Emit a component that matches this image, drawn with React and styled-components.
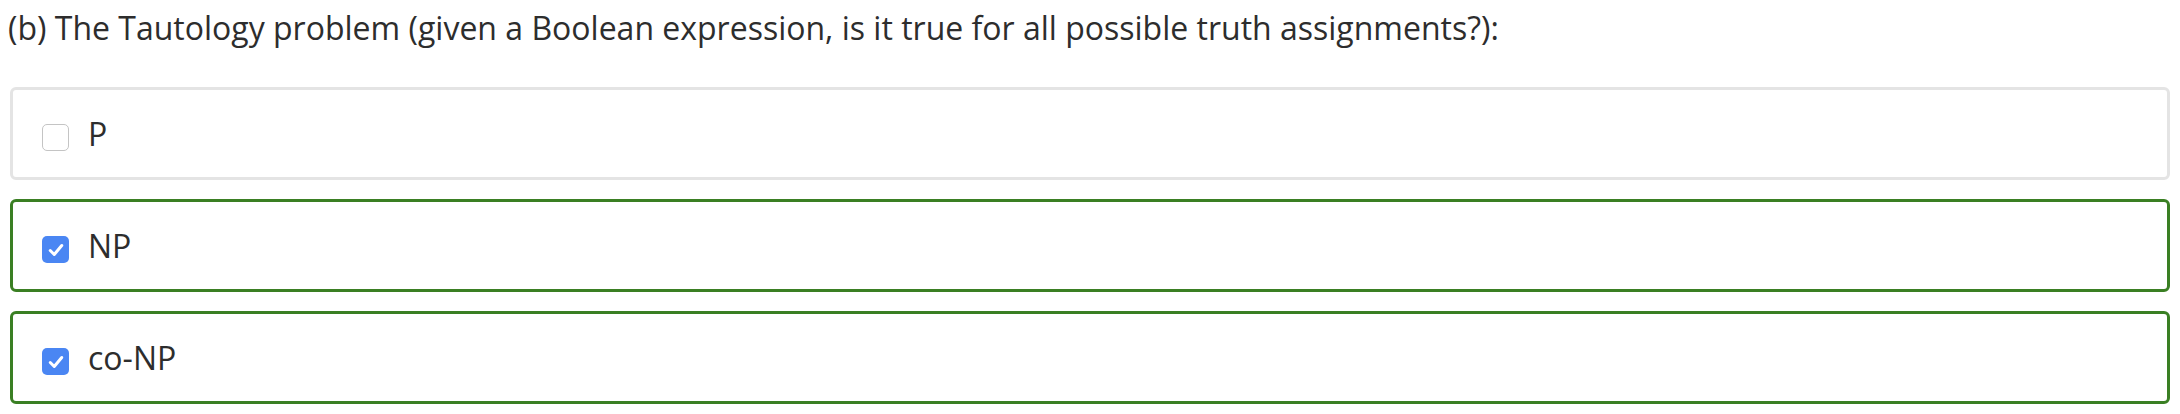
import styled, { createGlobalStyle } from "styled-components"

const GlobalStyle = createGlobalStyle`
  body {
    margin: 0;
    background: #ffffff;
    font-family: "Open Sans", Lato, sans-serif;
    color: #2d2d2d;
  }
`

const Page = styled.div`
  padding: 0 10px 0 8px;
`

const Question = styled.div`
  font-size: 32px;
  line-height: 56px;
  height: 87px;
`

const Options = styled.div`
  display: flex;
  flex-direction: column;
  gap: 19px;
  margin-left: 2px;
`

const Option = styled.label`
  display: flex;
  align-items: center;
  gap: 19px;
  height: 93px;
  box-sizing: border-box;
  padding-left: 29px;
  border: 3px solid ${(p) => (p.$correct ? "#3a7f23" : "#e4e4e4")};
  border-radius: 6px;
  font-size: 32px;
`

const Box = styled.span`
  width: 27px;
  height: 27px;
  margin-top: 8px;
  box-sizing: border-box;
  border-radius: 5px;
  display: flex;
  align-items: center;
  justify-content: center;
  background: ${(p) => (p.$checked ? "#4a86f3" : "#ffffff")};
  border: ${(p) => (p.$checked ? "none" : "1px solid #c4c4c4")};
`

const Text = styled.span`
  color: #2d2d2d;
`

const options = [
  { label: "P", checked: false },
  { label: "NP", checked: true },
  { label: "co-NP", checked: true },
]

export default function App() {
  return (
    <Page>
      <GlobalStyle />
      <Question>
        (b) The Tautology problem (given a Boolean expression, is it true for
        all possible truth assignments?):
      </Question>
      <Options>
        {options.map((o) => (
          <Option key={o.label} $correct={o.checked}>
            <Box $checked={o.checked}>
              {o.checked && (
                <svg width="20" height="20" viewBox="0 0 16 16">
                  <path
                    d="M3.4 8.4 L6.6 11.6 L12.6 4.4"
                    fill="none"
                    stroke="#ffffff"
                    strokeWidth="2.4"
                    strokeLinecap="round"
                    strokeLinejoin="round"
                  />
                </svg>
              )}
            </Box>
            <Text>{o.label}</Text>
          </Option>
        ))}
      </Options>
    </Page>
  )
}
